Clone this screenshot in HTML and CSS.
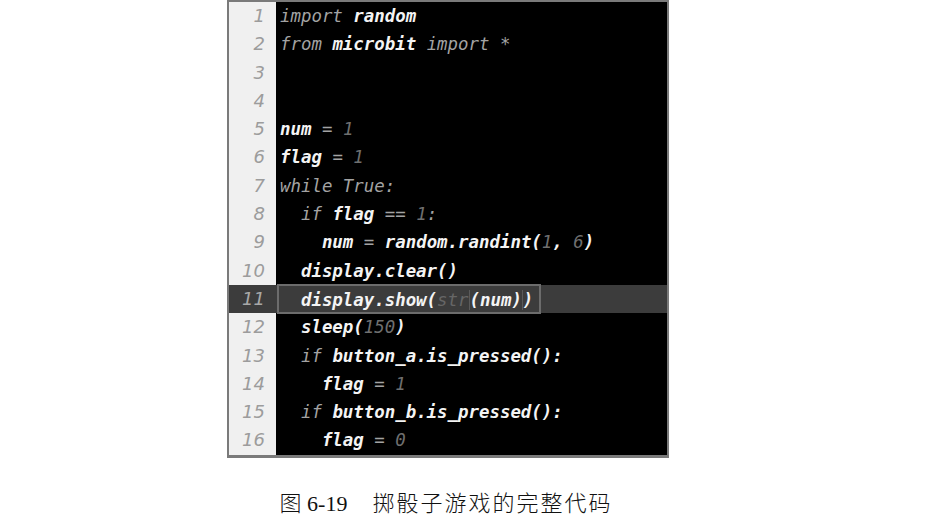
FILE: index.html
```html
<!DOCTYPE html>
<html lang="zh-CN">
<head>
<meta charset="utf-8">
<title>图 6-19 掷骰子游戏的完整代码</title>
<link rel="stylesheet" href="styles.css">
</head>
<body>
<div class="page">
  <figure class="fig">
    <div class="editor">
      <div class="row"><span class="ln">1</span><span class="src"><span class="k">import</span> <span class="w">random</span></span></div>
      <div class="row"><span class="ln">2</span><span class="src"><span class="k">from</span> <span class="w">microbit</span> <span class="k">import *</span></span></div>
      <div class="row"><span class="ln">3</span><span class="src"></span></div>
      <div class="row"><span class="ln">4</span><span class="src"></span></div>
      <div class="row"><span class="ln">5</span><span class="src"><span class="w">num</span> <span class="k">=</span> <span class="n">1</span></span></div>
      <div class="row"><span class="ln">6</span><span class="src"><span class="w">flag</span> <span class="k">=</span> <span class="n">1</span></span></div>
      <div class="row"><span class="ln">7</span><span class="src"><span class="k">while True:</span></span></div>
      <div class="row"><span class="ln">8</span><span class="src">  <span class="k">if</span> <span class="w">flag</span> <span class="k">==</span> <span class="n">1</span><span class="k">:</span></span></div>
      <div class="row"><span class="ln">9</span><span class="src">    <span class="w">num</span> <span class="k">=</span> <span class="w">random.randint(</span><span class="n">1</span><span class="w">, </span><span class="n">6</span><span class="w">)</span></span></div>
      <div class="row"><span class="ln">10</span><span class="src">  <span class="w">display.clear()</span></span></div>
      <div class="row active"><span class="ln">11</span><span class="src"><span class="box">  <span class="w">display.show(</span><span class="d">str</span><span class="w match">(num)</span><span class="w">)</span></span></span></div>
      <div class="row"><span class="ln">12</span><span class="src">  <span class="w">sleep(</span><span class="n">150</span><span class="w">)</span></span></div>
      <div class="row"><span class="ln">13</span><span class="src">  <span class="k">if</span> <span class="w">button_a.is_pressed():</span></span></div>
      <div class="row"><span class="ln">14</span><span class="src">    <span class="w">flag</span> <span class="k">=</span> <span class="n">1</span></span></div>
      <div class="row"><span class="ln">15</span><span class="src">  <span class="k">if</span> <span class="w">button_b.is_pressed():</span></span></div>
      <div class="row"><span class="ln">16</span><span class="src">    <span class="w">flag</span> <span class="k">=</span> <span class="n">0</span></span></div>
    </div>
    <figcaption class="caption"><span class="fig-no"><span class="cjk">图</span> 6-19</span><span class="title">掷骰子游戏的完整代码</span></figcaption>
  </figure>
</div>
</body>
</html>
```

FILE: styles.css
```css
html, body {
  margin: 0;
  padding: 0;
  background: #ffffff;
}

.page {
  width: 896px;
  display: flex;
  justify-content: center;
}

.fig {
  margin: 0;
  display: flex;
  flex-direction: column;
  align-items: center;
}

.editor {
  width: 442px;
  box-sizing: border-box;
  border: 2px solid #7a7a7a;
  border-bottom-width: 3px;
  background: #000000;
  display: flex;
  flex-direction: column;
  font-family: "DejaVu Sans Mono", monospace;
  font-size: 17.4px;
  font-style: italic;
}

.row {
  display: flex;
  height: 28.3px;
  line-height: 28.3px;
}

.ln {
  width: 47px;
  flex: none;
  box-sizing: border-box;
  padding-right: 11px;
  text-align: right;
  background: #f0f0f0;
  color: #9c9c9c;
  font-family: "DejaVu Sans", sans-serif;
  font-size: 18px;
}

.src {
  flex: 1;
  padding-left: 4px;
  white-space: pre;
  color: #f2f2f2;
}

.k { color: #a3a3a3; }
.w { color: #f4f4f4; font-weight: bold; }
.n { color: #6f6f6f; }
.d { color: #666666; }

.row.active .ln {
  background: #3c3c3c;
  color: #a8a8a8;
}

.row.active .src {
  background: #3c3c3c;
  padding-left: 1px;
}

.box {
  display: inline-block;
  box-sizing: border-box;
  width: 264px;
  height: 30px;
  margin-top: -1px;
  line-height: 28px;
  border: 2px solid #6c6c6c;
  padding-left: 1px;
  vertical-align: top;
}

.match {
  border-left: 1px solid #5a5a5a;
  border-right: 1px solid #5a5a5a;
}

.caption {
  margin-top: 28px;
  margin-right: 4px;
  font-family: "Liberation Serif", "Noto Sans CJK SC", serif;
  font-size: 22px;
  line-height: 30px;
  color: #111111;
  display: flex;
}

.caption .cjk {
  font-family: "Noto Sans CJK SC", sans-serif;
  font-weight: 300;
}

.caption .title {
  margin-left: 25px;
  letter-spacing: 2px;
  font-family: "Noto Sans CJK SC", sans-serif;
  font-weight: 300;
}
```
